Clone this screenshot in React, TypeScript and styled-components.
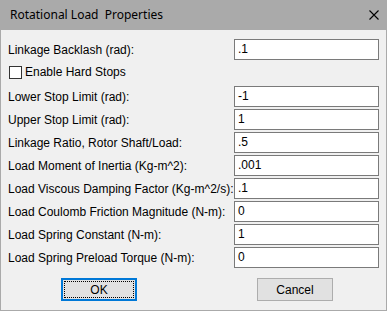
import React from "react";
import styled, { createGlobalStyle } from "styled-components";

const GlobalStyle = createGlobalStyle`
  html, body {
    margin: 0;
    padding: 0;
    background: #ffffff;
  }
  body {
    font-family: "Liberation Sans", Arial, sans-serif;
    font-size: 12px;
    color: #000000;
  }
`;

interface Field {
  label: string;
  value: string;
}

const topField: Field = { label: "Linkage Backlash  (rad):", value: ".1" };

const fields: Field[] = [
  { label: "Lower Stop Limit (rad):", value: "-1" },
  { label: "Upper Stop Limit (rad):", value: "1" },
  { label: "Linkage Ratio, Rotor Shaft/Load:", value: ".5" },
  { label: "Load Moment of Inertia (Kg-m^2):", value: ".001" },
  { label: "Load Viscous Damping Factor (Kg-m^2/s):", value: ".1" },
  { label: "Load Coulomb Friction Magnitude (N-m):", value: "0" },
  { label: "Load Spring Constant (N-m):", value: "1" },
  { label: "Load Spring Preload Torque (N-m):", value: "0" },
];

const CloseIcon = () => (
  <svg width="10" height="10" viewBox="0 0 10 10">
    <path d="M0.5 0.5 L9.5 9.5 M9.5 0.5 L0.5 9.5" stroke="#000" strokeWidth="1.1" fill="none" />
  </svg>
);

const FieldRow = ({ label, value }: Field) => (
  <Row>
    <Label>{label}</Label>
    <Edit>{value}</Edit>
  </Row>
);

export default function App() {
  return (
    <>
      <GlobalStyle />
      <Window>
        <TitleBar>
          <Title>Rotational Load&nbsp; Properties</Title>
          <CloseButton>
            <CloseIcon />
          </CloseButton>
        </TitleBar>
        <Body>
          <FieldRow {...topField} />
          <CheckRow>
            <CheckBox />
            <CheckLabel>Enable Hard Stops</CheckLabel>
          </CheckRow>
          <Fields>
            {fields.map((f) => (
              <FieldRow key={f.label} {...f} />
            ))}
          </Fields>
          <ButtonRow>
            <Button $default>
              <FocusRing>OK</FocusRing>
            </Button>
            <Button>Cancel</Button>
          </ButtonRow>
        </Body>
      </Window>
    </>
  );
}

const Window = styled.div`
  width: 387px;
  height: 311px;
  box-sizing: border-box;
  border: 1px solid #aaaaaa;
  border-top: none;
  background: #f0f0f0;
  display: flex;
  flex-direction: column;
`;

const TitleBar = styled.div`
  height: 30px;
  background: #aaaaaa;
  display: flex;
  align-items: center;
  justify-content: space-between;
  padding: 0 7px 0 10px;
  margin: 0 -1px;
`;

const Title = styled.div`
  font-family: "Noto Sans", "Liberation Sans", sans-serif;
  font-size: 12px;
  color: #000;
  padding-bottom: 1px;
`;

const CloseButton = styled.div`
  width: 10px;
  height: 10px;
  display: flex;
  margin-right: 1px;
`;

const Body = styled.div`
  padding: 9px 7px 0 7px;
  display: flex;
  flex-direction: column;
`;

const Row = styled.div`
  display: flex;
  align-items: center;
  height: 21px;
`;

const Label = styled.div`
  flex: 1;
  white-space: nowrap;
`;

const Edit = styled.div`
  width: 145px;
  height: 21px;
  box-sizing: border-box;
  border: 1px solid #7a7a7a;
  background: #ffffff;
  padding: 0 3px;
  line-height: 19px;
`;

const CheckRow = styled.div`
  display: flex;
  align-items: center;
  height: 20px;
  margin: 2px 0 4px;
  gap: 3px;
`;

const CheckBox = styled.div`
  width: 13px;
  height: 13px;
  box-sizing: border-box;
  border: 1px solid #333333;
  background: #ffffff;
  margin-left: 1px;
`;

const CheckLabel = styled.div`
  white-space: nowrap;
`;

const Fields = styled.div`
  display: flex;
  flex-direction: column;
  gap: 2px;
`;

const ButtonRow = styled.div`
  display: flex;
  padding-left: 53px;
  gap: 120px;
  margin-top: 10px;
`;

const Button = styled.div<{ $default?: boolean }>`
  width: 76px;
  height: 23px;
  box-sizing: border-box;
  background: #e1e1e1;
  border: ${(p) => (p.$default ? "2px solid #0078d7" : "1px solid #adadad")};
  display: flex;
  align-items: center;
  justify-content: center;
  padding: ${(p) => (p.$default ? "1px" : "0")};
`;

const FocusRing = styled.div`
  flex: 1;
  align-self: stretch;
  border: 1px dotted #000000;
  display: flex;
  align-items: center;
  justify-content: center;
`;
